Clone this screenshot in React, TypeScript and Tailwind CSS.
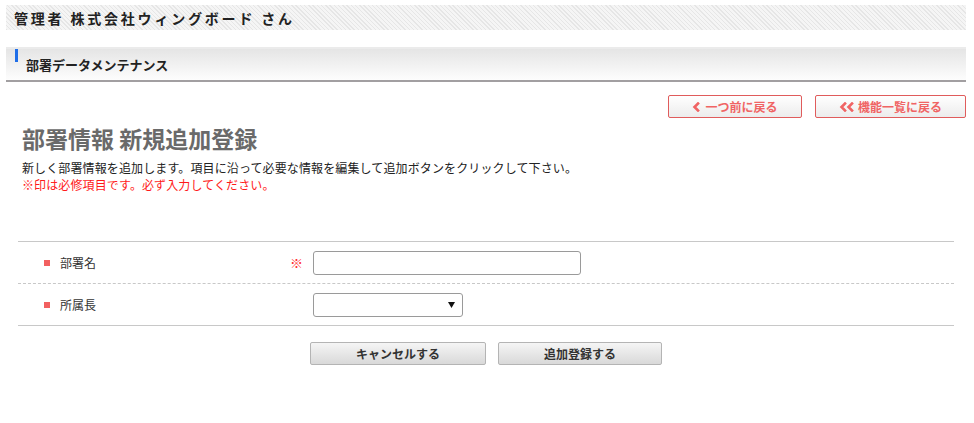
// 部署データメンテナンス: 新規追加登録フォーム
const font = "font-['Noto_Sans_CJK_JP','Noto_Sans',sans-serif]";

function Chevron({ double }: { double?: boolean }) {
  return (
    <svg className={double ? "w-[16px] h-[10px]" : "w-[8px] h-[10px]"} viewBox={double ? "0 0 16 10" : "0 0 8 10"} fill="none" stroke="#f06464" strokeWidth="2.6" strokeLinecap="square" aria-hidden="true">
      <path d="M6 1.5L2.5 5L6 8.5" />
      {double && <path d="M13 1.5L9.5 5L13 8.5" />}
    </svg>
  );
}

export default function App() {
  return (
    <div className={`${font} w-[974px] h-[423px] bg-white text-[#333] pt-[5px]`}>
      {/* top user bar */}
      <div className="mx-[6px] w-[960px] h-[25px] flex items-center pl-[8px] bg-[repeating-linear-gradient(45deg,#e6e6e6_0,#e6e6e6_1px,#f5f5f5_1px,#f5f5f5_3px)]">
        <span className="text-[14px] font-bold tracking-[0.2em] text-[#222] leading-none">管理者 株式会社ウィングボード さん</span>
      </div>

      {/* section header */}
      <div className="mx-[6px] w-[960px] mt-[17px] h-[35px] border-t-[2px] border-[#ebebeb] border-b-[2px] border-b-[#a29fa1] bg-gradient-to-b from-[#e5e5e5] to-[#fdfdfd] flex items-start pl-[9px]">
        <div className="w-[3px] h-[13px] bg-[#1f6ee8]" />
        <span className="ml-[8px] mt-[6px] text-[13px] font-bold text-[#222]">部署データメンテナンス</span>
      </div>

      {/* nav buttons */}
      <div className="flex justify-end gap-[13px] pr-[8px] mt-[13px]">
        <button type="button" className="w-[134px] h-[23px] flex items-center justify-center gap-[5px] rounded-[2px] border border-[#e05c5c] bg-gradient-to-b from-white to-[#ececec] text-[12px] font-bold text-[#f06464]">
          <Chevron />
          一つ前に戻る
        </button>
        <button type="button" className="w-[151px] h-[23px] flex items-center justify-center gap-[3px] rounded-[2px] border border-[#e05c5c] bg-gradient-to-b from-white to-[#ececec] text-[12px] font-bold text-[#f06464]">
          <Chevron double />
          機能一覧に戻る
        </button>
      </div>

      {/* title */}
      <div className="pl-[22px] mt-[5px]">
        <h1 className="text-[23px] font-bold text-[#6a6a6a] leading-[30px]">部署情報 新規追加登録</h1>
        <p className="mt-[6px] text-[12px] leading-[17px] text-[#222] tracking-[0.01em]">新しく部署情報を追加します。項目に沿って必要な情報を編集して追加ボタンをクリックして下さい。</p>
        <p className="text-[12px] leading-[17px] text-[#ff1a1a] tracking-[0.01em]">※印は必修項目です。必ず入力してください。</p>
      </div>

      {/* form table */}
      <div className="mx-[18px] w-[936px] mt-[48px] border-t border-[#c8c8c8] border-b">
        <div className="h-[42px] flex items-center border-b border-dashed border-[#c8c8c8]">
          <span className="ml-[26px] w-[6px] h-[6px] bg-[#f26060]" />
          <span className="ml-[10px] w-[230px] text-[12px] text-[#333]">部署名</span>
          <span className="w-[23px] text-[13px] text-[#ff3030] leading-none">※</span>
          <input type="text" className="w-[268px] h-[24px] rounded-[3px] border border-[#9a9a9a] bg-white" />
        </div>
        <div className="h-[41px] flex items-center">
          <span className="ml-[26px] w-[6px] h-[6px] bg-[#f26060]" />
          <span className="ml-[10px] w-[253px] text-[12px] text-[#333]">所属長</span>
          <div className="w-[150px] h-[24px] rounded-[3px] border border-[#9a9a9a] bg-white flex items-center justify-end pr-[7px]">
            <svg className="w-[7px] h-[6px]" viewBox="0 0 7 6" aria-hidden="true">
              <path d="M0 0H7L3.5 6Z" fill="#111" />
            </svg>
          </div>
        </div>
      </div>

      {/* action buttons */}
      <div className="flex justify-center gap-[12px] mt-[16px] pr-[2px]">
        <button type="button" className="w-[176px] h-[23px] rounded-[2px] border border-[#b4b4b4] bg-gradient-to-b from-[#f5f5f5] to-[#d9d9d9] text-[12px] font-bold text-[#333]">キャンセルする</button>
        <button type="button" className="w-[164px] h-[23px] rounded-[2px] border border-[#b4b4b4] bg-gradient-to-b from-[#f5f5f5] to-[#d9d9d9] text-[12px] font-bold text-[#333]">追加登録する</button>
      </div>
    </div>
  );
}
